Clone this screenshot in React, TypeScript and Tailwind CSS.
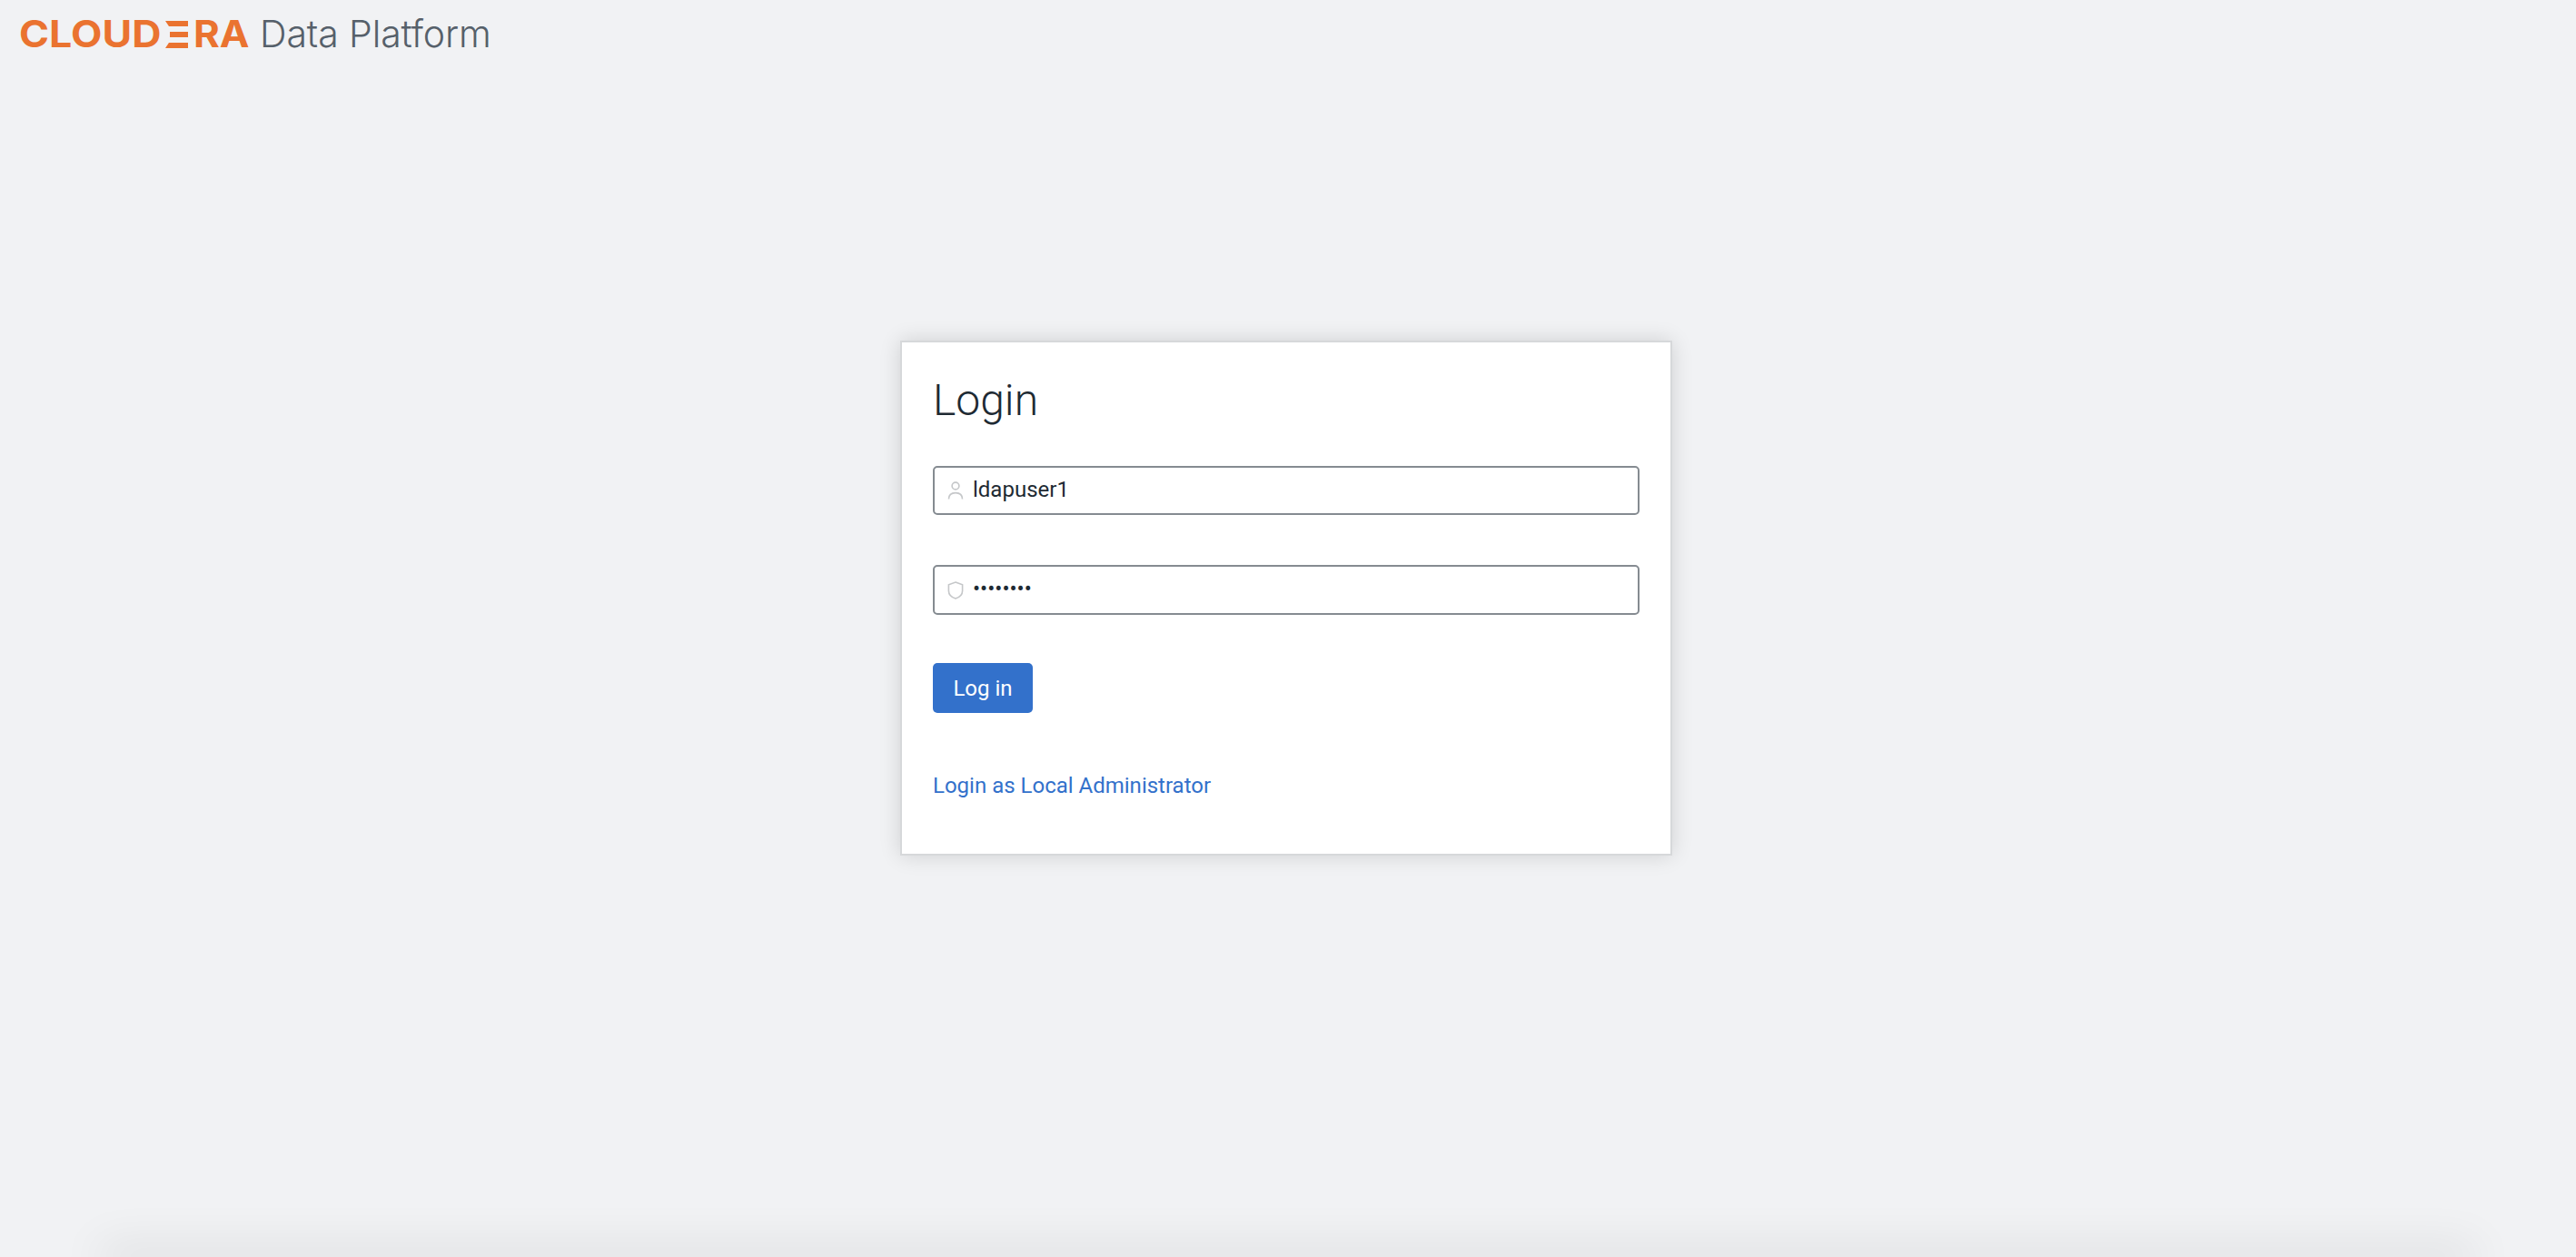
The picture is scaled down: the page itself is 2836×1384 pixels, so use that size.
export default function App() {
  return (
    <div className="relative flex h-screen w-full flex-col overflow-hidden bg-[#f1f2f4] font-['Roboto',sans-serif] text-[#1e2a33]">
      <header className="flex h-[42px] items-center pl-[21px] pt-[33px]">
        <div className="flex items-center font-['Inter',sans-serif] text-[41px] leading-none font-bold text-[#ea7330]">
          <span className="inline-block w-[161px] origin-left scale-x-[1.09] whitespace-nowrap">CLOUD</span>
          <svg className="h-[30px] w-[25px] shrink-0" viewBox="0 0 25 30" fill="#ea7330" aria-hidden="true">
            <polygon points="0,0 25,0 25,6 4,6" />
            <polygon points="5,12 25,12 25,18 5,18" />
            <polygon points="4,24 25,24 25,30 0,30" />
          </svg>
          <span className="ml-[6px] inline-block w-[60px] origin-left scale-x-[1.07] whitespace-nowrap">RA</span>
        </div>
        <span className="ml-[13px] font-['Inter',sans-serif] text-[41px] leading-none font-light tracking-[-0.1px] text-[#56606a]">Data Platform</span>
      </header>
      <main className="ml-[991px] mt-[333px] h-[567px] w-[850px] border-2 border-[#d6d8da] bg-white px-[34px] pt-[36px] shadow-[0_0_22px_rgba(0,0,0,0.14)]">
        <h1 className="text-[48px] leading-[56px] font-light">Login</h1>
        <div className="mt-[44px] flex h-[54px] w-[778px] items-center rounded-[5px] border-2 border-[#858b91] bg-white pl-[14px]">
          <svg className="h-[20px] w-[18px] shrink-0" viewBox="0 0 18 20" fill="none" stroke="#c5c7c9" strokeWidth="1.6">
            <circle cx="9" cy="5" r="3.9" />
            <path d="M1.5 19.5 C1.5 15 4.5 12.6 9 12.6 C13.5 12.6 16.5 15 16.5 19.5" />
          </svg>
          <input
            readOnly
            type="text"
            value="ldapuser1"
            className="ml-[10px] -mt-[3px] w-full bg-transparent text-[24px] leading-none text-[#1e2a33] outline-none"
          />
        </div>
        <div className="mt-[55px] flex h-[55px] w-[778px] items-center rounded-[5px] border-2 border-[#858b91] bg-white pl-[14px]">
          <svg className="h-[20px] w-[18px] shrink-0" viewBox="0 0 18 20" fill="none" stroke="#c5c7c9" strokeWidth="1.6">
            <path d="M9 1 L16.6 3.8 V10.5 C16.6 14.8 13.4 17.6 9 19 C4.6 17.6 1.4 14.8 1.4 10.5 V3.8 Z" />
          </svg>
          <input
            readOnly
            type="password"
            value="password"
            className="ml-[10px] -mt-[3px] w-full bg-transparent text-[24px] leading-none text-[#1e2a33] outline-none"
          />
        </div>
        <button className="mt-[53px] block h-[55px] w-[110px] rounded-[5px] bg-[#3371cb] text-[24px] text-white">Log in</button>
        <a href="#" className="mt-[65px] block text-[24px] leading-[30px] text-[#3371cb]">Login as Local Administrator</a>
      </main>
      <footer className="mx-[120px] mt-auto h-0 shadow-[0_0_50px_10px_rgba(0,0,0,0.12)]" />
    </div>
  );
}
